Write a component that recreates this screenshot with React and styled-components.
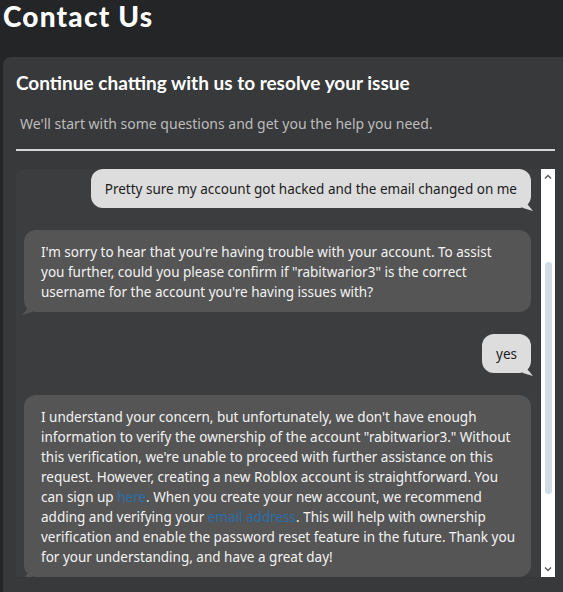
import React from "react";
import styled, { createGlobalStyle } from "styled-components";

const Global = createGlobalStyle`
  html, body { margin: 0; padding: 0; background: #232527; overflow: hidden; }
  body { font-family: "Noto Sans", "Open Sans", sans-serif; }
  * { box-sizing: border-box; }
`;

const Page = styled.div`
  width: 563px;
  height: 592px;
  display: flex;
  flex-direction: column;
  padding-left: 3px;
  background: #232527;
`;

const Heading = styled.h1`
  margin: 0;
  font-family: Lato, "Noto Sans", sans-serif;
  font-weight: 900;
  font-size: 28px;
  line-height: 32px;
  color: #ffffff;
  letter-spacing: 1.2px;
`;

const Card = styled.section`
  margin-top: 25px;
  flex: 1;
  min-height: 0;
  background: #38393b;
  border-top-left-radius: 8px;
  padding: 14px 8px 15px 13px;
  display: flex;
  flex-direction: column;
`;

const Title = styled.h2`
  margin: 0;
  font-family: Lato, "Noto Sans", sans-serif;
  font-weight: 700;
  font-size: 19px;
  line-height: 24px;
  color: #ffffff;
`;

const Subtitle = styled.p`
  margin: 19px 0 0 4px;
  font-family: "Noto Sans", sans-serif;
  font-size: 14px;
  line-height: 20px;
  color: #bdbdbd;
`;

const Divider = styled.hr`
  margin: 15px 0 0 0;
  border: none;
  height: 2px;
  background: #d4d4d4;
`;

const ChatArea = styled.div`
  margin-top: 18px;
  flex: 1;
  min-height: 0;
  display: flex;
  background: #3c3d3f;
  border-top-left-radius: 8px;
`;

const MessageList = styled.div`
  flex: 1;
  min-width: 0;
  overflow: hidden;
  display: flex;
  flex-direction: column;
  justify-content: flex-end;
  gap: 22px;
  padding: 0 10px 0 8px;
`;

const Bubble = styled.div`
  position: relative;
  flex-shrink: 0;
  white-space: nowrap;
  font-family: "Noto Sans", sans-serif;
  font-size: 13.5px;
  line-height: 20px;
  border-radius: 12px;
  align-self: ${(p) => (p.$mine ? "flex-end" : "stretch")};
  background: ${(p) => (p.$mine ? "#dddddd" : "#555555")};
  color: ${(p) => (p.$mine ? "#1c1c1c" : "#f3f3f3")};
  padding: ${(p) => (p.$mine ? "10px 14px 9px 14px" : "12px 14px 10px 17px")};

  &::after {
    content: "";
    position: absolute;
    bottom: -3px;
    width: 10px;
    height: 12px;
    background: inherit;
    ${(p) =>
      p.$mine
        ? "right: -2px; clip-path: polygon(0 0, 100% 100%, 0 75%);"
        : "left: -2px; clip-path: polygon(100% 0, 0 100%, 100% 75%);"}
  }
`;

const Link = styled.a`
  color: #2a6fab;
  text-decoration: none;
`;

const ScrollBar = styled.div`
  width: 14px;
  flex-shrink: 0;
  background: #ffffff;
  display: flex;
  flex-direction: column;
  align-items: center;
`;

const Arrow = styled.div`
  height: 16px;
  width: 100%;
  display: flex;
  align-items: center;
  justify-content: center;
`;

const Track = styled.div`
  flex: 1;
  width: 100%;
  display: flex;
  flex-direction: column;
  align-items: center;
`;

const Thumb = styled.div`
  width: 7px;
  border-radius: 4px;
  background: #d2dce5;
  margin-top: ${(p) => p.$top}px;
  height: ${(p) => p.$height}px;
`;

const Chevron = ({ up }) => (
  <svg width="8" height="6" viewBox="0 0 8 6">
    <path
      d={up ? "M1 4.5 L4 1.5 L7 4.5" : "M1 1.5 L4 4.5 L7 1.5"}
      fill="none"
      stroke="#5f5f5f"
      strokeWidth="1.5"
    />
  </svg>
);

export default function App() {
  return (
    <>
      <Global />
      <Page>
        <Heading>Contact Us</Heading>
        <Card>
          <Title>Continue chatting with us to resolve your issue</Title>
          <Subtitle>We'll start with some questions and get you the help you need.</Subtitle>
          <Divider />
          <ChatArea>
            <MessageList>
              <Bubble $mine>Pretty sure my account got hacked and the email changed on me</Bubble>
              <Bubble>
                I'm sorry to hear that you're having trouble with your account. To assist
                <br />
                you further, could you please confirm if "rabitwarior3" is the correct
                <br />
                username for the account you're having issues with?
              </Bubble>
              <Bubble $mine>yes</Bubble>
              <Bubble>
                I understand your concern, but unfortunately, we don't have enough
                <br />
                information to verify the ownership of the account "rabitwarior3." Without
                <br />
                this verification, we're unable to proceed with further assistance on this
                <br />
                request. However, creating a new Roblox account is straightforward. You
                <br />
                can sign up <Link href="#">here</Link>. When you create your new account, we recommend
                <br />
                adding and verifying your <Link href="#">email address</Link>. This will help with ownership
                <br />
                verification and enable the password reset feature in the future. Thank you
                <br />
                for your understanding, and have a great day!
              </Bubble>
            </MessageList>
            <ScrollBar>
              <Arrow>
                <Chevron up />
              </Arrow>
              <Track>
                <Thumb $top={77} $height={232} />
              </Track>
              <Arrow>
                <Chevron />
              </Arrow>
            </ScrollBar>
          </ChatArea>
        </Card>
      </Page>
    </>
  );
}
